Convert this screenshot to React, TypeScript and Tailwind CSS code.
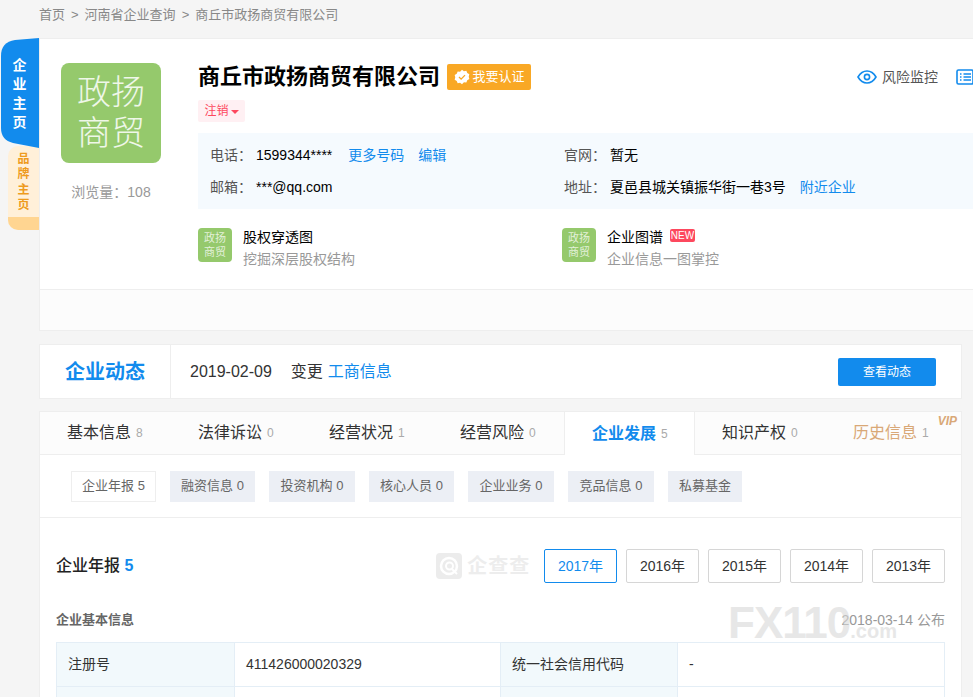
import React from "react";

const FONT = "font-['Liberation_Sans','Noto_Sans_CJK_SC',sans-serif]";

const tabs = [
  { name: "基本信息", count: "8" },
  { name: "法律诉讼", count: "0" },
  { name: "经营状况", count: "1" },
  { name: "经营风险", count: "0" },
  { name: "企业发展", count: "5", active: true },
  { name: "知识产权", count: "0" },
  { name: "历史信息", count: "1", vip: true },
];

const subTabs = [
  { name: "企业年报 5", w: "w-[85px]", active: true },
  { name: "融资信息 0", w: "w-[85px]" },
  { name: "投资机构 0", w: "w-[86px]" },
  { name: "核心人员 0", w: "w-[85px]" },
  { name: "企业业务 0", w: "w-[86px]" },
  { name: "竞品信息 0", w: "w-[86px]" },
  { name: "私募基金", w: "w-[74px]" },
];

const years = ["2017年", "2016年", "2015年", "2014年", "2013年"];

const SmallLogo = () => (
  <div className="flex h-[34px] w-[34px] shrink-0 items-center justify-center rounded-[4px] bg-[#95c96c] text-center text-[11px] leading-[14px] text-white/75">
    政扬
    <br />
    商贸
  </div>
);

const Sidebar = () => (
  <div className="w-[39px] shrink-0">
    <div className="relative z-10 ml-[1px] flex h-[110px] w-[38px] flex-col items-center justify-center bg-[#128bed] pr-[1px] pt-[2px] text-[14px] font-bold leading-[19px] text-white [clip-path:path('M38,0_L14,2_Q0,4_0,18_L0,90_Q0,102_12,105_L38,110_Z')]">
      <span>企</span>
      <span>业</span>
      <span>主</span>
      <span>页</span>
    </div>
    <div className="-mt-[2px] ml-[8px] flex h-[84px] w-[31px] flex-col overflow-hidden rounded-l-[10px] bg-[#fff0d9]">
      <div className="flex flex-1 flex-col items-center justify-center pt-[2px] text-[12px] font-bold leading-[15.5px] text-[#ee9b1e]">
        <span>品</span>
        <span>牌</span>
        <span>主</span>
        <span>页</span>
      </div>
      <div className="h-[13px] bg-[#ffd591]" />
    </div>
  </div>
);

const HeaderCard = () => (
  <div className="h-[293px] w-[1000px] border border-[#eeeeee] bg-white">
    <div className="flex h-[250px] pl-[21px] pt-[24px]">
      <div className="flex w-[137px] shrink-0 flex-col">
        <div className="flex h-[100px] w-[100px] items-center justify-center rounded-[8px] bg-[#95c96c] text-center text-[34px] font-light leading-[41px] text-white/85">
          政扬
          <br />
          商贸
        </div>
        <div className="mt-[19px] w-[100px] text-center text-[14px] leading-5 text-[#999999]">浏览量：108</div>
      </div>
      <div className="flex-1">
        <div className="flex h-[28px] items-center">
          <h1 className="text-[22px] font-bold leading-[28px] text-black">商丘市政扬商贸有限公司</h1>
          <button className="ml-[7px] flex h-[26px] w-[84px] items-center justify-center gap-[3px] rounded-[2px] bg-[#f9a825] text-[13px] text-white">
            <svg viewBox="0 0 24 24" className="h-[16px] w-[16px]">
              <path
                fill="#ffffff"
                d="M12 1l2.9 2.2 3.6-.4 1.4 3.3 3.1 1.9-.9 3.5.9 3.5-3.1 1.9-1.4 3.3-3.6-.4L12 23l-2.9-2.2-3.6.4-1.4-3.3-3.1-1.9.9-3.5-.9-3.5 3.1-1.9 1.4-3.3 3.6.4z"
              />
              <path d="M7.5 12l3.2 3.2 5.8-6" fill="none" stroke="#f9a825" strokeWidth="2" />
            </svg>
            我要认证
          </button>
          <div className="ml-[326px] flex items-center gap-[5px] text-[14px] text-[#555555]">
            <svg viewBox="0 0 20 14" className="h-[14px] w-[20px]" fill="none" stroke="#128bed" strokeWidth="1.6">
              <path d="M1 7c2.2-3.8 5.3-6 9-6s6.800 2.200 9 6c-2.200 3.800-5.300 6-9 6s-6.800-2.200-9-6z" />
              <circle cx="10" cy="7" r="2.600" />
            </svg>
            风险监控
          </div>
          <svg viewBox="0 0 18 16" className="ml-[18px] h-[16px] w-[18px]" fill="none" stroke="#128bed" strokeWidth="1.600">
            <rect x="1" y="1" width="16" height="14" rx="1.500" />
            <path d="M4 5h1.500M7.500 5H15M4 8h1.500M7.500 8H15M4 11h1.500M7.500 11H15" />
          </svg>
        </div>
        <div className="mt-[9px] flex h-[22px] w-[47px] items-center justify-center gap-[2px] rounded-[2px] bg-[#fff0f3] text-[12px] text-[#fd485e]">
          注销
          <span className="mt-[2px] h-0 w-0 border-x-[4px] border-t-[4px] border-x-transparent border-t-[#fd485e]" />
        </div>
        <div className="mt-[11px] flex h-[76px] w-[800px] flex-col justify-center gap-[12px] bg-[#f5fafe] pl-[12px] text-[14px] leading-5 text-[#333333]">
          <div className="flex">
            <div className="flex w-[354px]">
              <span className="w-[46px] text-[#555555]">电话：</span>
              <span className="text-black">1599344****</span>
              <a className="ml-[16px] text-[#128bed]">更多号码</a>
              <a className="ml-[14px] text-[#128bed]">编辑</a>
            </div>
            <span className="w-[46px] text-[#555555]">官网：</span>
            <span className="text-black">暂无</span>
          </div>
          <div className="flex">
            <div className="flex w-[354px]">
              <span className="w-[46px] text-[#555555]">邮箱：</span>
              <span className="text-black">***@qq.com</span>
            </div>
            <span className="w-[46px] text-[#555555]">地址：</span>
            <span className="text-black">夏邑县城关镇振华街一巷3号</span>
            <a className="ml-[14px] text-[#128bed]">附近企业</a>
          </div>
        </div>
        <div className="mt-[19px] flex">
          <div className="flex w-[364px] gap-[11px]">
            <SmallLogo />
            <div className="-mt-[2px] text-[14px] leading-[22px]">
              <div className="text-black">股权穿透图</div>
              <div className="text-[#999999]">挖掘深层股权结构</div>
            </div>
          </div>
          <div className="flex gap-[11px]">
            <SmallLogo />
            <div className="-mt-[2px] text-[14px] leading-[22px]">
              <div className="flex items-center gap-[7px] text-black">
                企业图谱
                <span className="mb-[3px] flex h-[13px] w-[25px] items-center justify-center rounded-[2px] bg-[#fd485e] text-[10px] leading-none text-white">NEW</span>
              </div>
              <div className="text-[#999999]">企业信息一图掌控</div>
            </div>
          </div>
        </div>
      </div>
    </div>
    <div className="h-[41px] border-t border-[#eeeeee] bg-[#fcfcfc]" />
  </div>
);

const DynamicCard = () => (
  <div className="mt-[13px] flex h-[55px] w-[923px] items-center border border-[#eeeeee] bg-white">
    <div className="flex h-full w-[131px] items-center justify-center border-r border-[#eeeeee] text-[20px] font-bold text-[#128bed]">企业动态</div>
    <div className="ml-[19px] text-[16px] text-[#333333]">2019-02-09</div>
    <div className="ml-[19px] text-[16px] text-[#333333]">变更</div>
    <a className="ml-[5px] text-[16px] text-[#128bed]">工商信息</a>
    <button className="ml-auto mr-[25px] h-[28px] w-[98px] rounded-[2px] bg-[#128bed] text-[12px] text-white">查看动态</button>
  </div>
);

const DetailCard = () => (
  <div className="relative mt-[12px] w-[923px] border border-[#eeeeee] bg-white">
    <div className="flex h-[43px] border-b border-[#eeeeee] bg-[#fcfcfc]">
      {tabs.map((t) => (
        <div
          key={t.name}
          className={
            t.active
              ? "-mb-px flex w-[131px] items-center gap-[5px] border-x border-[#eeeeee] bg-white pl-[27px]"
              : "flex w-[131px] items-center gap-[5px] pl-[27px]"
          }
        >
          <span
            className={
              t.active
                ? "text-[16px] font-bold text-[#128bed]"
                : t.vip
                  ? "text-[16px] text-[#d9a877]"
                  : "text-[16px] text-[#333333]"
            }
          >
            {t.name}
          </span>
          <span className="text-[12px] text-[#aaaaaa]">{t.count}</span>
        </div>
      ))}
    </div>
    <div className="absolute right-[4px] top-[2px] text-[12px] font-bold italic leading-[14px] text-[#d9a877]">VIP</div>
    <div className="flex h-[63px] items-center gap-[14px] border-b border-[#eeeeee] pl-[31px]">
      {subTabs.map((s) => (
        <div
          key={s.name}
          className={
            s.active
              ? `flex h-[31px] ${s.w} items-center justify-center border border-[#eeeeee] bg-white text-[13px] text-[#666666]`
              : `flex h-[31px] ${s.w} items-center justify-center bg-[#eceff5] text-[13px] text-[#666666]`
          }
        >
          {s.name}
        </div>
      ))}
    </div>
    <div className="px-[16px] pb-[40px]">
      <div className="mt-[31px] flex h-[34px] items-center">
        <div className="text-[16px] font-medium text-[#222222]">
          企业年报 <span className="font-bold text-[#128bed]">5</span>
        </div>
        <div className="ml-[303px] flex items-center gap-[5px] opacity-90">
          <svg viewBox="0 0 26 26" className="h-[26px] w-[26px]">
            <rect width="26" height="26" rx="4" fill="#ebebeb" />
            <circle cx="13" cy="13" r="8" fill="none" stroke="#ffffff" strokeWidth="2.500" />
            <circle cx="13.500" cy="13" r="3.500" fill="none" stroke="#ffffff" strokeWidth="2" />
            <path d="M16 16l5 5" stroke="#ffffff" strokeWidth="2" />
          </svg>
          <span className="text-[20px] font-bold leading-none tracking-[1px] text-[#ececec]">企查查</span>
        </div>
        <div className="ml-auto flex gap-[9px]">
          {years.map((y, i) => (
            <div
              key={y}
              className={
                i === 0
                  ? "flex h-[34px] w-[73px] items-center justify-center rounded-[2px] border border-[#128bed] text-[14px] text-[#128bed]"
                  : "flex h-[34px] w-[73px] items-center justify-center rounded-[2px] border border-[#d6d6d6] text-[14px] text-[#333333]"
              }
            >
              {y}
            </div>
          ))}
        </div>
      </div>
      <div className="relative mt-[26px] flex h-[22px] items-center justify-between">
        <span className="text-[13px] font-bold text-[#666666]">企业基本信息</span>
        <span className="text-[14px] text-[#999999]">2018-03-14 公布</span>
        <div className="absolute right-[48px] top-[-8px] flex items-baseline font-bold leading-none text-[#d8d8d8] opacity-60">
          <span className="text-[44px] tracking-[-1px]">FX110</span>
          <span className="text-[20px]">.com</span>
        </div>
      </div>
      <div className="mt-[11px] grid grid-cols-[178px_266px_177px_1fr] border-l border-t border-[#e4eef6] text-[14px] text-[#333333]">
        <div className="flex h-[44px] items-center border-b border-r border-[#e4eef6] bg-[#f2f9fc] pl-[11px]">注册号</div>
        <div className="flex h-[44px] items-center border-b border-r border-[#e4eef6] pl-[11px]">411426000020329</div>
        <div className="flex h-[44px] items-center border-b border-r border-[#e4eef6] bg-[#f2f9fc] pl-[11px]">统一社会信用代码</div>
        <div className="flex h-[44px] items-center border-b border-r border-[#e4eef6] pl-[11px]">-</div>
        <div className="h-[44px] border-b border-r border-[#e4eef6] bg-[#f2f9fc]" />
        <div className="h-[44px] border-b border-r border-[#e4eef6]" />
        <div className="h-[44px] border-b border-r border-[#e4eef6] bg-[#f2f9fc]" />
        <div className="h-[44px] border-b border-r border-[#e4eef6]" />
      </div>
    </div>
  </div>
);

export default function App() {
  return (
    <div className={`h-[697px] w-[973px] overflow-hidden bg-[#f5f5f5] ${FONT}`}>
      <div className="flex h-[38px] items-center gap-[6px] pb-[8px] pl-[39px] text-[13px] text-[#888888]">
        <span>首页</span>
        <span>&gt;</span>
        <span>河南省企业查询</span>
        <span>&gt;</span>
        <span>商丘市政扬商贸有限公司</span>
      </div>
      <div className="flex">
        <Sidebar />
        <div className="min-w-0">
          <HeaderCard />
          <DynamicCard />
          <DetailCard />
        </div>
      </div>
    </div>
  );
}
